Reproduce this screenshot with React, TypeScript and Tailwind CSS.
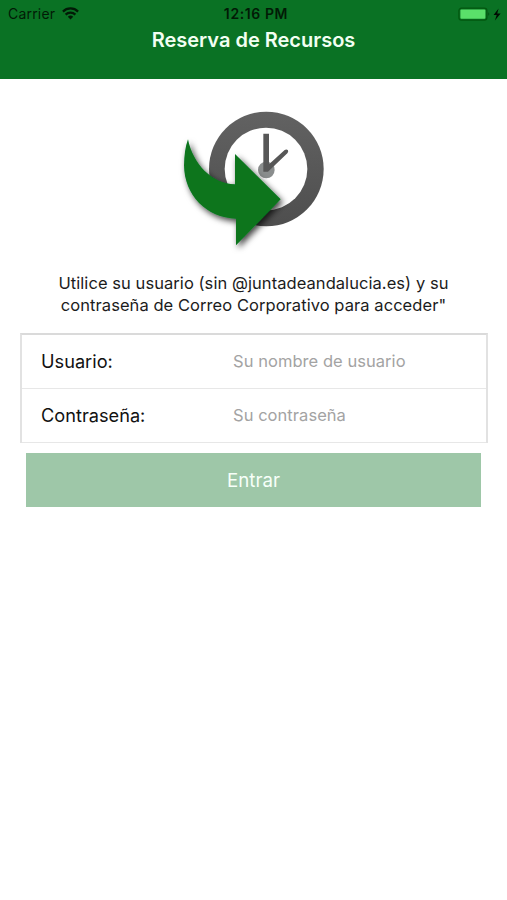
function WifiIcon() {
  return (
    <svg width="17" height="13" viewBox="0 0 17 13" className="-mt-px ml-[7px]" fill="none" stroke="#021a06" strokeWidth="2.2">
      <path d="M0.9 4.6A10.8 10.8 0 0 1 16.1 4.6" />
      <path d="M3.6 7.6A7 7 0 0 1 13.4 7.6" />
      <path d="M8.5 12.4L5.8 9.8A3.8 3.8 0 0 1 11.2 9.8Z" fill="#021a06" stroke="none" />
    </svg>
  );
}

function BatteryIcon() {
  return (
    <svg width="44" height="14" viewBox="0 0 44 14" className="-mt-px">
      <rect x="0.9" y="1.2" width="28" height="12" rx="2.6" fill="#0a7224" stroke="#03570f" strokeWidth="1.2" />
      <rect x="2.4" y="2.6" width="25" height="9.2" rx="1" fill="#5ae06a" />
      <path d="M30.4 5.1Q32.2 7.1 30.4 9.1Z" fill="#03490f" />
      <path d="M40.6 1.5L35.6 8H38.7L36.9 13.4L42.6 6.4H39.2Z" fill="#010a02" />
    </svg>
  );
}

function Logo() {
  return (
    <svg width="170" height="160" viewBox="0 0 510 480" className="shrink-0">
      <defs>
        <filter id="shadow" x="-20%" y="-20%" width="150%" height="150%">
          <feDropShadow dx="7" dy="9" stdDeviation="9" floodColor="#000" floodOpacity="0.75" />
        </filter>
        <linearGradient id="ring" x1="0" y1="0" x2="0" y2="1">
          <stop offset="0" stopColor="#626262" />
          <stop offset="1" stopColor="#4e4e4e" />
        </linearGradient>
      </defs>
      <circle cx="289" cy="207" r="172" fill="url(#ring)" />
      <circle cx="288" cy="207" r="124" fill="#fff" />
      <circle cx="289" cy="210" r="25" fill="#8a8d8d" />
      <path d="M280 101H297V193L344 150Q350 147 354 151Q356 156 352 160L294 215H280Z" fill="#575757" />
      <path
        d="M54 118C68 190 125 252 195 253V162L332 298L198 436V356C110 354 43 286 42 196Q43 148 54 118Z"
        fill="#08751f"
        filter="url(#shadow)"
      />
    </svg>
  );
}

function Field({ label, placeholder, type }: { label: string; placeholder: string; type: string }) {
  return (
    <label className="flex h-[54px] items-center border-b border-[#e7e7e7] pl-[19px]">
      <span className="w-[192px] text-[18.2px] text-[#111]">{label}</span>
      <input
        type={type}
        placeholder={placeholder}
        className="w-[230px] bg-transparent text-[16.5px] tracking-[0.05px] outline-none placeholder:text-[#a3a3a3]"
      />
    </label>
  );
}

export default function App() {
  return (
    <main className="flex h-[900px] w-[507px] flex-col bg-white font-['Inter','Liberation_Sans',sans-serif]">
      <header className="h-[79px] bg-[#0a7224]">
        <div className="grid h-7 grid-cols-[1fr_auto_1fr] items-center text-[#021a06]">
          <div className="flex items-center pl-2">
            <span className="text-[14px] leading-7 tracking-[0.2px]">Carrier</span>
            <WifiIcon />
          </div>
          <span className="pl-[5px] text-[14px] font-semibold leading-7 tracking-[0.6px]">12:16 PM</span>
          <div className="flex justify-end pr-[5px]">
            <BatteryIcon />
          </div>
        </div>
        <h1 className="text-center text-[20px] font-semibold leading-6 text-[#f2fff2]">Reserva de Recursos</h1>
      </header>
      <div className="flex justify-center pl-[3px] pt-[21px]">
        <Logo />
      </div>
      <p className="mt-3 whitespace-nowrap text-center text-[16.5px] leading-[22px] tracking-[0.06px] text-[#1c1c1c]">
        Utilice su usuario (sin @juntadeandalucia.es) y su
        <br />
        contraseña de Correo Corporativo para acceder"
      </p>
      <form className="mt-[17px] flex flex-col">
        <div className="-mb-px ml-5 mr-[19px] border-x-2 border-t-2 border-x-[#e2e2e2] border-t-[#dadada]">
          <Field label="Usuario:" placeholder="Su nombre de usuario" type="text" />
          <Field label="Contraseña:" placeholder="Su contraseña" type="password" />
        </div>
        <button type="button" className="mx-[26px] mt-[11px] h-[54px] bg-[#9ec7a8] pt-[3px] text-[18.7px] text-[#f7fff9]">
          Entrar
        </button>
      </form>
    </main>
  );
}
